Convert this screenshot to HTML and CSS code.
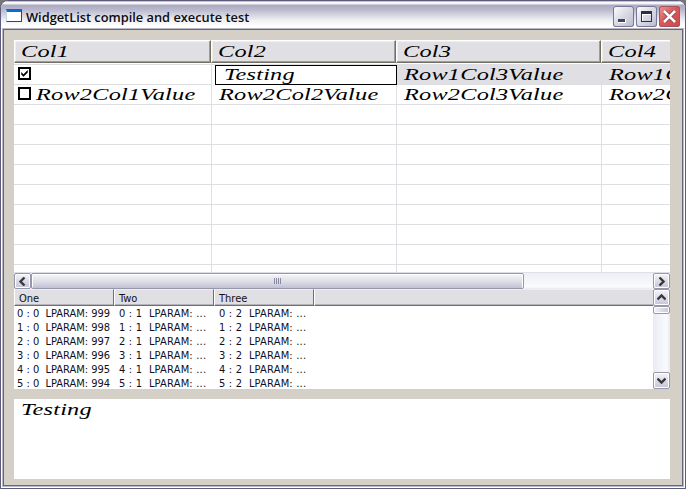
FILE: index.html
```
<!DOCTYPE html>
<html lang="en">
<head>
<meta charset="utf-8">
<title>WidgetList compile and execute test</title>
<link rel="stylesheet" href="styles.css">
</head>
<body>
<div class="window">
  <header class="titlebar">
    <span class="app-icon"></span>
    <h1 class="title"><span>WidgetList compile and execute test</span></h1>
    <div class="win-btn"><svg width="21" height="21" shape-rendering="crispEdges"><path d="M5 13h8v4H5z" fill="#fff"/><path d="M5 13h7v3H5z" fill="#454363"/></svg></div>
    <div class="win-btn"><svg width="21" height="21" shape-rendering="crispEdges"><path fill-rule="evenodd" d="M5 5h11v11H5zM6 8h9v7H6z" fill="#302e42"/><path d="M6 8.500h9M6.500 8v7" stroke="#fff" fill="none"/></svg></div>
    <div class="win-btn close"><svg width="21" height="21"><path d="M5.500 5.500l10 10M15.500 5.500l-10 10" stroke="#84404a" stroke-width="4"/><path d="M5 5l11 11M16 5L5 16" stroke="#fff" stroke-width="2.500"/></svg></div>
  </header>
  <main class="client">
    <section class="grid">
      <div class="row head"><div><span class="wide">Col1</span></div><div><span class="wide">Col2</span></div><div><span class="wide">Col3</span></div><div><span class="wide">Col4</span></div></div>
      <div class="row gap"><div></div><div></div><div></div><div></div></div>
      <div class="row selected"><div><svg class="check" width="13" height="13"><path d="M1 1h11v11H1z" fill="#fff" stroke="#000" stroke-width="2"/><path d="M3.500 5.500v2l2 2 4-4v-2l-4 4z" fill="#000" stroke="#000" stroke-width=".5"/></svg></div><div class="edit"><span class="wide">Testing</span></div><div><span class="wide">Row1Col3Value</span></div><div><span class="wide">Row1C</span></div></div>
      <div class="row"><div><svg class="check" width="13" height="13"><path d="M1 1h11v11H1z" fill="#fff" stroke="#000" stroke-width="2"/></svg><span class="wide">Row2Col1Value</span></div><div><span class="wide">Row2Col2Value</span></div><div><span class="wide">Row2Col3Value</span></div><div><span class="wide">Row2C</span></div></div>
      <div class="row"><div></div><div></div><div></div><div></div></div>
      <div class="row"><div></div><div></div><div></div><div></div></div>
      <div class="row"><div></div><div></div><div></div><div></div></div>
      <div class="row"><div></div><div></div><div></div><div></div></div>
      <div class="row"><div></div><div></div><div></div><div></div></div>
      <div class="row"><div></div><div></div><div></div><div></div></div>
      <div class="row"><div></div><div></div><div></div><div></div></div>
      <div class="row"><div></div><div></div><div></div><div></div></div>
      <div class="row last"><div></div><div></div><div></div><div></div></div>
    </section>
    <div class="hscroll">
      <div class="sb-btn"><svg width="9" height="9"><path d="M6.500 .5l-4 4 4 4" /></svg></div>
      <div class="hthumb"><i></i><i></i><i></i><i></i></div>
      <div class="sb-btn right"><svg width="9" height="9"><path d="M2.500 .5l4 4-4 4"/></svg></div>
    </div>
    <section class="list">
      <div class="list-main">
        <div class="lhead"><div>One</div><div>Two</div><div>Three</div><div></div></div>
        <div class="lrow"><div>0 : 0&nbsp; LPARAM: 999</div><div>0 : 1&nbsp; LPARAM: ...</div><div>0 : 2&nbsp; LPARAM: ...</div></div>
        <div class="lrow"><div>1 : 0&nbsp; LPARAM: 998</div><div>1 : 1&nbsp; LPARAM: ...</div><div>1 : 2&nbsp; LPARAM: ...</div></div>
        <div class="lrow"><div>2 : 0&nbsp; LPARAM: 997</div><div>2 : 1&nbsp; LPARAM: ...</div><div>2 : 2&nbsp; LPARAM: ...</div></div>
        <div class="lrow"><div>3 : 0&nbsp; LPARAM: 996</div><div>3 : 1&nbsp; LPARAM: ...</div><div>3 : 2&nbsp; LPARAM: ...</div></div>
        <div class="lrow"><div>4 : 0&nbsp; LPARAM: 995</div><div>4 : 1&nbsp; LPARAM: ...</div><div>4 : 2&nbsp; LPARAM: ...</div></div>
        <div class="lrow"><div>5 : 0&nbsp; LPARAM: 994</div><div>5 : 1&nbsp; LPARAM: ...</div><div>5 : 2&nbsp; LPARAM: ...</div></div>
      </div>
      <div class="vscroll">
        <div class="sb-btn"><svg width="9" height="9"><path d="M.5 6.500l4-4 4 4"/></svg></div>
        <div class="vthumb"></div>
        <div class="sb-btn bottom"><svg width="9" height="9"><path d="M.5 2.500l4 4 4-4"/></svg></div>
      </div>
    </section>
    <section class="memo"><span class="wide">Testing</span></section>
  </main>
</div>
</body>
</html>
```
FILE: styles.css
```
* { box-sizing: border-box; }
body { margin: 0; background: #777; overflow: hidden; }
.window {
  width: 686px; height: 489px;
  display: flex; flex-direction: column;
  border: 1px solid #5e5c7c; border-radius: 8px 8px 0 0;
  background: #fff; overflow: hidden;
  padding: 0 1px 1px;
}
.titlebar {
  height: 28px; flex: none; margin: 0 -1px;
  display: flex; align-items: flex-start;
  padding: 5px 5px 0 5px;
  background: linear-gradient(#8583a0 0, #fff 1px, #eeeef4 3px, #acabc2 4px, #b6b5ca 8px, #d5d5e1 14px, #f2f2f6 20px, #fff 25px, #fff 27px, #e4e4ec 28px);
}
.app-icon { width: 16px; height: 13px; margin-top: 3px; background: #fff; border: 1px solid #c5d3e6; border-top: 3px solid #0b6bd0; border-right-color: #24477b; border-bottom-color: #24477b; }
.title { flex: 1; margin: 2px 0 0 4px; font: 600 13px/18px "Open Sans", sans-serif; color: #0c0c14; white-space: nowrap; }
.title span { display: inline-block; transform: scaleX(.985); transform-origin: 0 0; }
.win-btn { width: 21px; height: 21px; margin-left: 2px; border-radius: 3px; box-shadow: inset 0 0 0 1px #777796; background: linear-gradient(135deg, #fff, #dddde8 45%, #b9b9cd); }
.win-btn svg { display: block; }
.win-btn.close { background: linear-gradient(135deg, #e99a9a, #d9585b 45%, #c9484c); box-shadow: inset 0 0 0 1px #a5535f; }
.client {
  flex: 1; min-height: 0; background: #d4d0c8;
  border: 1px solid #66647f; box-shadow: 0 0 0 1px #b9b8c9;
  margin: 0 1px 1px; padding: 10px 12px 0 10px;
}
.grid { height: 232px; width: 656px; background: #fff; overflow: hidden; }
.row { display: grid; grid-template-columns: 198px 185px 205px 68px; height: 20px; }
.row > div { border-right: 1px solid #dfdee3; border-bottom: 1px solid #dfdee3; padding-left: 7px; overflow: hidden; white-space: nowrap; display: flex; min-width: 0; }
.row > div:last-child { border-right: 0; }
.row.gap { height: 2px; }
.row.last { height: 8px; }
.row.last > div { border-bottom: 0; }
.row.head { height: 23px; grid-template-columns: 197px 185px 205px 69px; }
.row.head > div { background: #e0dfe3; border: 1px solid #716f64; border-top-color: #fff; border-left-color: #fff; box-shadow: inset -1px -1px #9d9da1, inset 1px 1px #f1efe2; padding: 1px 0 0 6px; }
.row.head > div:last-child { border-right: 0; box-shadow: inset 0 -1px #9d9da1, inset 1px 1px #f1efe2; }
.wide { display: block; flex: none; font: italic 17px/20px "Liberation Serif", serif; letter-spacing: .15px; color: #000; transform: scaleX(1.43); transform-origin: 0 0; white-space: nowrap; }
.row > div > .wide { margin-left: -.5px; }
.row.selected > div { background: #e0dfe3; }
.row.selected > div:first-child { background: #fff; }
.row.selected .edit { background: #fff; border: 1px solid #000; margin: 0 0 0 3px; padding-left: 8px; }
.selected .edit .wide { margin-top: -1px; }
.check { flex: none; margin: 2px 5px 0 -3px; }
.hscroll { height: 17px; width: 656px; display: flex; border-top: 1px solid #dfdee8; background: linear-gradient(#edeff5, #fafbfd 14px, #e9e9f2); }
.sb-btn { width: 17px; height: 16px; flex: none; display: flex; align-items: center; justify-content: center; border: 1px solid #9797ac; border-radius: 2px; box-shadow: inset 0 0 0 1px #fff; background: linear-gradient(#f4f4f8, #c6c5d7); }
.sb-btn path { fill: none; stroke: #38383d; stroke-width: 2.400; }
.right { margin-left: auto; }
.hthumb { width: 493px; display: flex; justify-content: center; align-items: center; gap: 1px; border: 1px solid #9797ac; border-radius: 2px; box-shadow: inset 1px 1px #fff, inset -1px 0 #fff; background: linear-gradient(#f5f5f9, #dddde7 55%, #c2c1d5); }
.hthumb i { width: 1px; height: 6px; background: #8989a1; }
.list { width: 656px; height: 100px; display: flex; background: #fff; font: 11px/14px "DejaVu Sans Condensed", "DejaVu Sans", sans-serif; color: #10101a; }
.list-main { flex: 1; min-width: 0; }
.lhead { height: 17px; margin-bottom: 1px; display: grid; grid-template-columns: 100px 100px 100px 1fr; grid-template-rows: 17px; }
.lhead > div { background: #e0dfe3; border: 1px solid #716f64; border-top-color: #f1efe2; border-left-color: #fff; box-shadow: inset 0 -1px #b5b4ba; padding-left: 4px; line-height: 17px; font-stretch: condensed; }
.lhead > div:last-child { border-right: 0; }
.lrow { height: 14px; display: grid; grid-template-columns: 102px 100px 100px; padding-left: 3px; }
.lrow > div { white-space: pre; font-stretch: condensed; letter-spacing: .2px; }
.lrow > div:first-child { letter-spacing: 0; }
.vscroll { width: 17px; display: flex; flex-direction: column; background: linear-gradient(90deg, #e9ebf2, #fafbfd 80%, #e9e9f2); }
.vscroll .sb-btn { height: 17px; }
.vthumb { height: 8px; border: 1px solid #9797ac; border-radius: 2px; box-shadow: inset 0 0 0 1px #fff; background: linear-gradient(90deg, #f4f4f8, #c6c5d7); }
.vscroll .bottom { margin-top: auto; }
.memo { width: 656px; height: 80px; margin-top: 10px; background: #fff; padding: 1px 0 0 7px; }
```
